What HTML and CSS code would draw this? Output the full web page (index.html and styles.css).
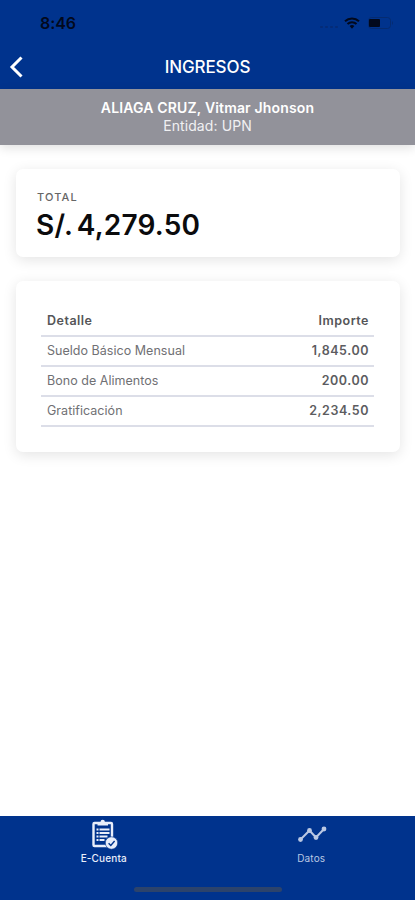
FILE: index.html
```html
<!DOCTYPE html>
<html lang="es">
    <head>
        <meta charset="utf-8">
        <meta name="viewport" content="width=device-width, initial-scale=1">
        <title>Ingresos</title>
        <link rel="stylesheet" href="styles.css">
    </head>
    <body>
        <div class="app">
            <header class="header">
                <div class="status">
                    <span class="time">8:46</span>
                    <div class="status-icons">
                        <span class="signal"><i></i><i></i><i></i><i></i></span>
                        <svg class="wifi" viewBox="0 0 16 12">
                            <path d="M1 4.2a10.2 10.2 0 0 1 14 0M3.5 7a6.5 6.5 0 0 1 9 0" fill="none" stroke="currentColor" stroke-width="2"/>
                            <path d="M5.6 9.1a3.5 3.5 0 0 1 4.8 0L8 11.8z" fill="currentColor"/>
                        </svg>
                        <svg class="battery" viewBox="0 0 26 12">
                            <rect x=".5" y=".5" width="22" height="11" rx="3" fill="none" stroke="#052b70"/>
                            <rect x="1" y="2" width="11" height="8" rx="1" fill="currentColor"/>
                            <path d="M24 4q2 2 0 4z" fill="#052b70"/>
                        </svg>
                    </div>
                </div>
                <div class="title-bar">
                    <svg class="back" viewBox="0 0 14 22">
                        <path d="M12.5 1.5L3 11l9.5 9.5" fill="none" stroke="currentColor" stroke-width="3"/>
                    </svg>
                    <h1>INGRESOS</h1>
                </div>
            </header>

            <div class="person">
                <div class="name">ALIAGA CRUZ, Vitmar Jhonson</div>
                <div class="entity">Entidad: UPN</div>
            </div>

            <main class="content">
                <section class="card total">
                    <div class="label">TOTAL</div>
                    <div class="amount">S/. 4,279.50</div>
                </section>

                <section class="card detail">
                    <table>
                        <thead>
                            <tr>
                                <th>Detalle</th>
                                <th>Importe</th>
                            </tr>
                        </thead>
                        <tbody>
                            <tr>
                                <td>Sueldo Básico Mensual</td>
                                <td>1,845.00</td>
                            </tr>
                            <tr>
                                <td>Bono de Alimentos</td>
                                <td>200.00</td>
                            </tr>
                            <tr>
                                <td>Gratificación</td>
                                <td>2,234.50</td>
                            </tr>
                        </tbody>
                    </table>
                </section>
            </main>

            <footer class="footer">
                <nav class="tabs">
                    <a class="tab active">
                        <svg viewBox="0 0 28 30">
                            <rect x="3.5" y="3" width="18.5" height="23" rx="1" fill="none" stroke="currentColor" stroke-width="2.4"/>
                            <path d="M7.5 5.5V2h3a2.2 2.2 0 0 1 4.4 0H18v3.500z" fill="currentColor"/>
                            <path d="M6.500 9.500h2M9.500 9.500h10M6.500 13h2M9.500 13h10M6.500 16.500h2M9.500 16.500h8M6.500 20h2M9.500 20h5" fill="none" stroke="currentColor" stroke-width="1.800"/>
                            <circle cx="21.5" cy="23" r="6.2" fill="currentColor" stroke="#00338d" stroke-width=".6"/>
                            <path d="M18.6 23.2l2.2 2.2 3.800-4.400" fill="none" stroke="#00338d" stroke-width="1.4"/>
                        </svg>
                        <span>E-Cuenta</span>
                    </a>
                    <a class="tab">
                        <svg viewBox="0 0 28 30">
                            <path d="M3.500 19.500l9-9 6.500 7 8-8.500" fill="none" stroke="currentColor" stroke-width="2"/>
                            <g fill="currentColor">
                                <circle cx="3.5" cy="19.5" r="2.4"/>
                                <circle cx="12.5" cy="10.5" r="2.4"/>
                                <circle cx="19" cy="17.5" r="2.4"/>
                                <circle cx="27" cy="9" r="2.4"/>
                            </g>
                        </svg>
                        <span>Datos</span>
                    </a>
                </nav>
                <div class="home-bar"></div>
            </footer>
        </div>
    </body>
</html>
```
FILE: styles.css
```css
* {
    box-sizing: border-box;
}

body {
    margin: 0;
    background: #fff;
    font-family: Inter, "Liberation Sans", sans-serif;
}

.app {
    display: flex;
    flex-flow: column;
    height: 100vh;
    min-height: 600px;
}

/* HEADER */
.header {
    height: 89px;
    background: #00338d;
    color: white;
}

.status {
    display: flex;
    justify-content: space-between;
    align-items: center;
    height: 46px;
    padding: 0 21px 0 40px;
    color: #02091c;
}

.time {
    font-size: 16px;
    font-weight: 600;
    letter-spacing: -.1px;
}

.status-icons {
    display: flex;
    align-items: center;
}

.signal {
    display: flex;
    gap: 2px;
    margin: 7px 6px 0 0;
}

.signal i {
    width: 3px;
    height: 2px;
    border-radius: 1px;
    background: #052b76;
}

.wifi {
    width: 16px;
    height: 12px;
    margin-right: 8px;
}

.battery {
    width: 26px;
    height: 12px;
}

.title-bar {
    display: flex;
    align-items: center;
    height: 42px;
    padding: 0 23px 0 9px;
}

.back {
    width: 14px;
    height: 22px;
}

.title-bar h1 {
    flex: 1;
    margin: 0;
    font-size: 17px;
    font-weight: 500;
    letter-spacing: -.1px;
    text-align: center;
}

.person {
    height: 56px;
    padding-top: 10px;
    background: #92929a;
    color: white;
    font-size: 14px;
    line-height: 18px;
    text-align: center;
    box-shadow: 0 3px 10px rgba(0, 0, 0, .12);
}

.person .name {
    font-weight: 600;
    letter-spacing: .16px;
}

.person .entity {
    color: #f0f0f2;
    letter-spacing: .1px;
}

/* CARDS */
.content {
    flex: 1;
    padding: 24px 15px 0 16px;
}

.card {
    margin-bottom: 24px;
    border-radius: 7px;
    background: white;
    box-shadow: 0 3px 14px rgba(0, 0, 0, .11);
}

.total {
    height: 88px;
    padding: 20px;
}

.total .label {
    padding-left: 1px;
    color: #666;
    font-size: 11px;
    font-weight: 500;
    line-height: 16px;
    letter-spacing: 1.1px;
}

.total .amount {
    color: #0b0b0d;
    font-size: 28px;
    font-weight: 600;
    line-height: 40px;
    letter-spacing: .18px;
    word-spacing: -3px;
}

.detail {
    height: 171px;
    padding: 25px 26px 0 25px;
}

.detail table {
    width: 100%;
    border-spacing: 0;
    color: #707074;
    font-size: 12.5px;
}

.detail th,
.detail td {
    height: 30px;
    padding: 0 5px 1px 6px;
    border-bottom: 2px solid #dcdee8;
    text-align: left;
}

.detail th {
    height: 31px;
    padding-bottom: 0;
    color: #555558;
    font-weight: 600;
    letter-spacing: .5px;
}

.detail td {
    letter-spacing: .03px;
}

.detail th:last-child,
.detail td:last-child {
    text-align: right;
}

.detail td:last-child {
    color: #5c5c60;
    font-weight: 600;
    letter-spacing: .55px;
}

/* FOOTER */
.footer {
    display: flex;
    flex-flow: column;
    justify-content: space-between;
    align-items: center;
    height: 84px;
    padding-bottom: 8px;
    background: #00338d;
}

.tabs {
    display: flex;
    width: 100%;
}

.tab {
    display: flex;
    flex: 1;
    flex-flow: column;
    align-items: center;
    padding-top: 4px;
    color: #bac8e3;
    font-size: 10px;
    line-height: 14px;
    letter-spacing: .15px;
}

.tab svg {
    width: 28px;
    height: 30px;
    margin-bottom: 1px;
    overflow: visible;
}

.tab.active {
    color: #e9eefa;
    font-weight: 500;
}

.home-bar {
    width: 148px;
    height: 5px;
    border-radius: 3px;
    background: #2c436b;
}
```
